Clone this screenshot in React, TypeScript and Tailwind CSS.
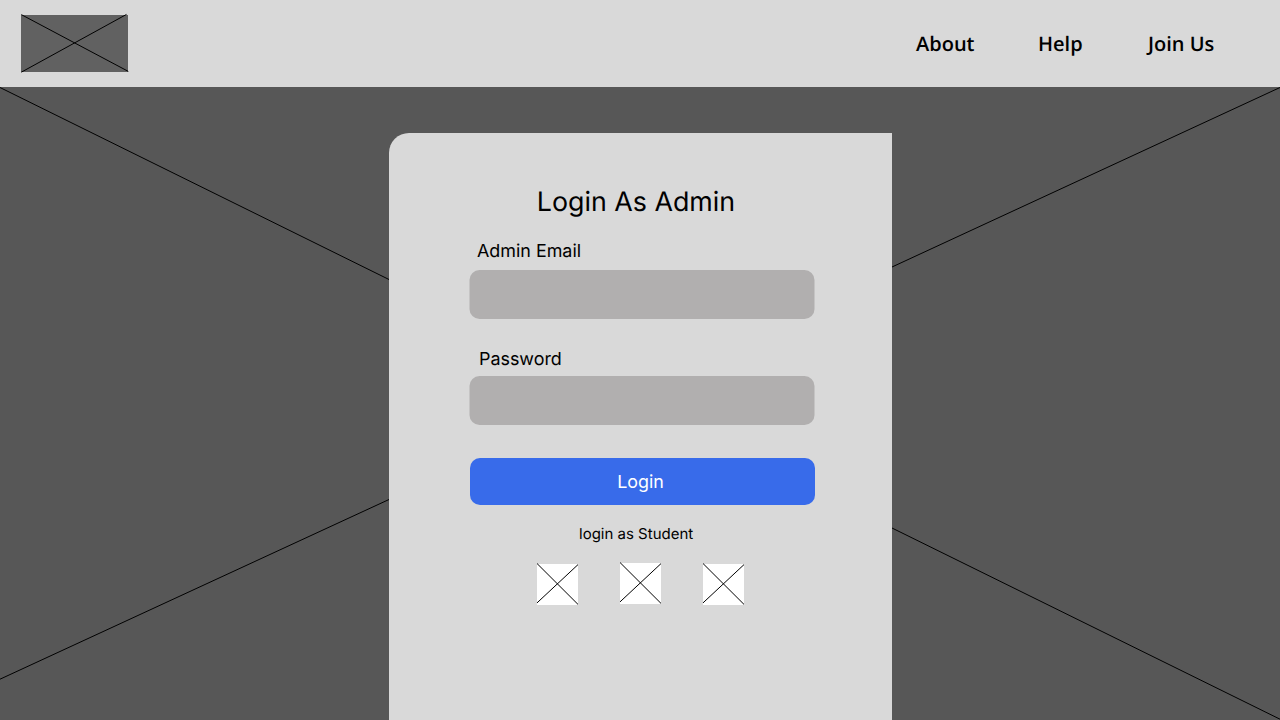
const services = [
  { name: "first", offset: "mt-px" },
  { name: "second", offset: "mt-0" },
  { name: "third", offset: "mt-px" },
];

export default function App() {
  return (
    <div className="flex h-[720px] w-[1280px] flex-col overflow-hidden bg-[#575757] font-['Inter',sans-serif] text-black [text-rendering:geometricPrecision]">
      <header className="flex h-[87px] shrink-0 items-start bg-[#d9d9d9] pl-[21px] pt-[15px]">
        <svg className="h-[57px] w-[107px] overflow-visible bg-[#616161]" viewBox="0 0 107 57" fill="none" stroke="black">
          <path d="M.3-.4 107.3 56.4M.3 57.2 105.5-.6" />
        </svg>
        <nav className="ml-[788px] flex pt-[14px] font-['Open_Sans',sans-serif] text-[20px] leading-[30px] font-semibold whitespace-nowrap">
          <a className="w-[122px]">About</a>
          <a className="w-[110px]">Help</a>
          <a>Join Us</a>
        </nav>
      </header>
      <main className="relative flex h-[633px] pl-[389px]">
        <svg className="absolute inset-0 h-[633px] w-[1280px]" viewBox="0 0 1280 633" fill="none" stroke="black">
          <path d="M0 .5 389 192.5M1280 .5 892 180M389 412.5 0 592.2M892 441 1280 632.2" />
        </svg>
        <section className="relative mt-[46px] flex h-[587px] w-[503px] flex-col rounded-tl-[20px] bg-[#d9d9d9] pl-20 pt-[53px]">
          <h1 className="pl-[67.8px] text-[26.8px] leading-[33px]">Login As Admin</h1>
          <label className="mt-[22px] pl-2 text-[17.9px] leading-[22px]">Admin Email</label>
          <input aria-label="Admin Email" className="mt-[7px] h-[49px] w-[345px] translate-x-[0.5px] rounded-[10px] bg-[#b1afaf]" />
          <label className="mt-[30px] pl-[10px] text-[17.9px] leading-[22px]">Password</label>
          <input aria-label="Password" type="password" className="mt-[5px] h-[49px] w-[345px] translate-x-[0.5px] rounded-[10px] bg-[#b1afaf]" />
          <button className="mt-[33px] ml-px h-[47px] w-[345px] rounded-[10px] bg-[#386bea] pr-[4px] text-[17.9px] leading-[22px] text-white">Login</button>
          <a className="mt-[20px] pl-[110px] text-[15px] leading-[18px]">login as Student</a>
          <div className="mt-[20px] ml-[68px] flex gap-[42px]">
            {services.map((s) => (
              <svg key={s.name} className={`${s.offset} h-[41px] w-[41px] overflow-visible bg-white`} viewBox="0 0 41 41" fill="none" stroke="black">
                <path d="M0-.5 41 40.4M0 38.9 41 .6" />
              </svg>
            ))}
          </div>
        </section>
      </main>
    </div>
  );
}
